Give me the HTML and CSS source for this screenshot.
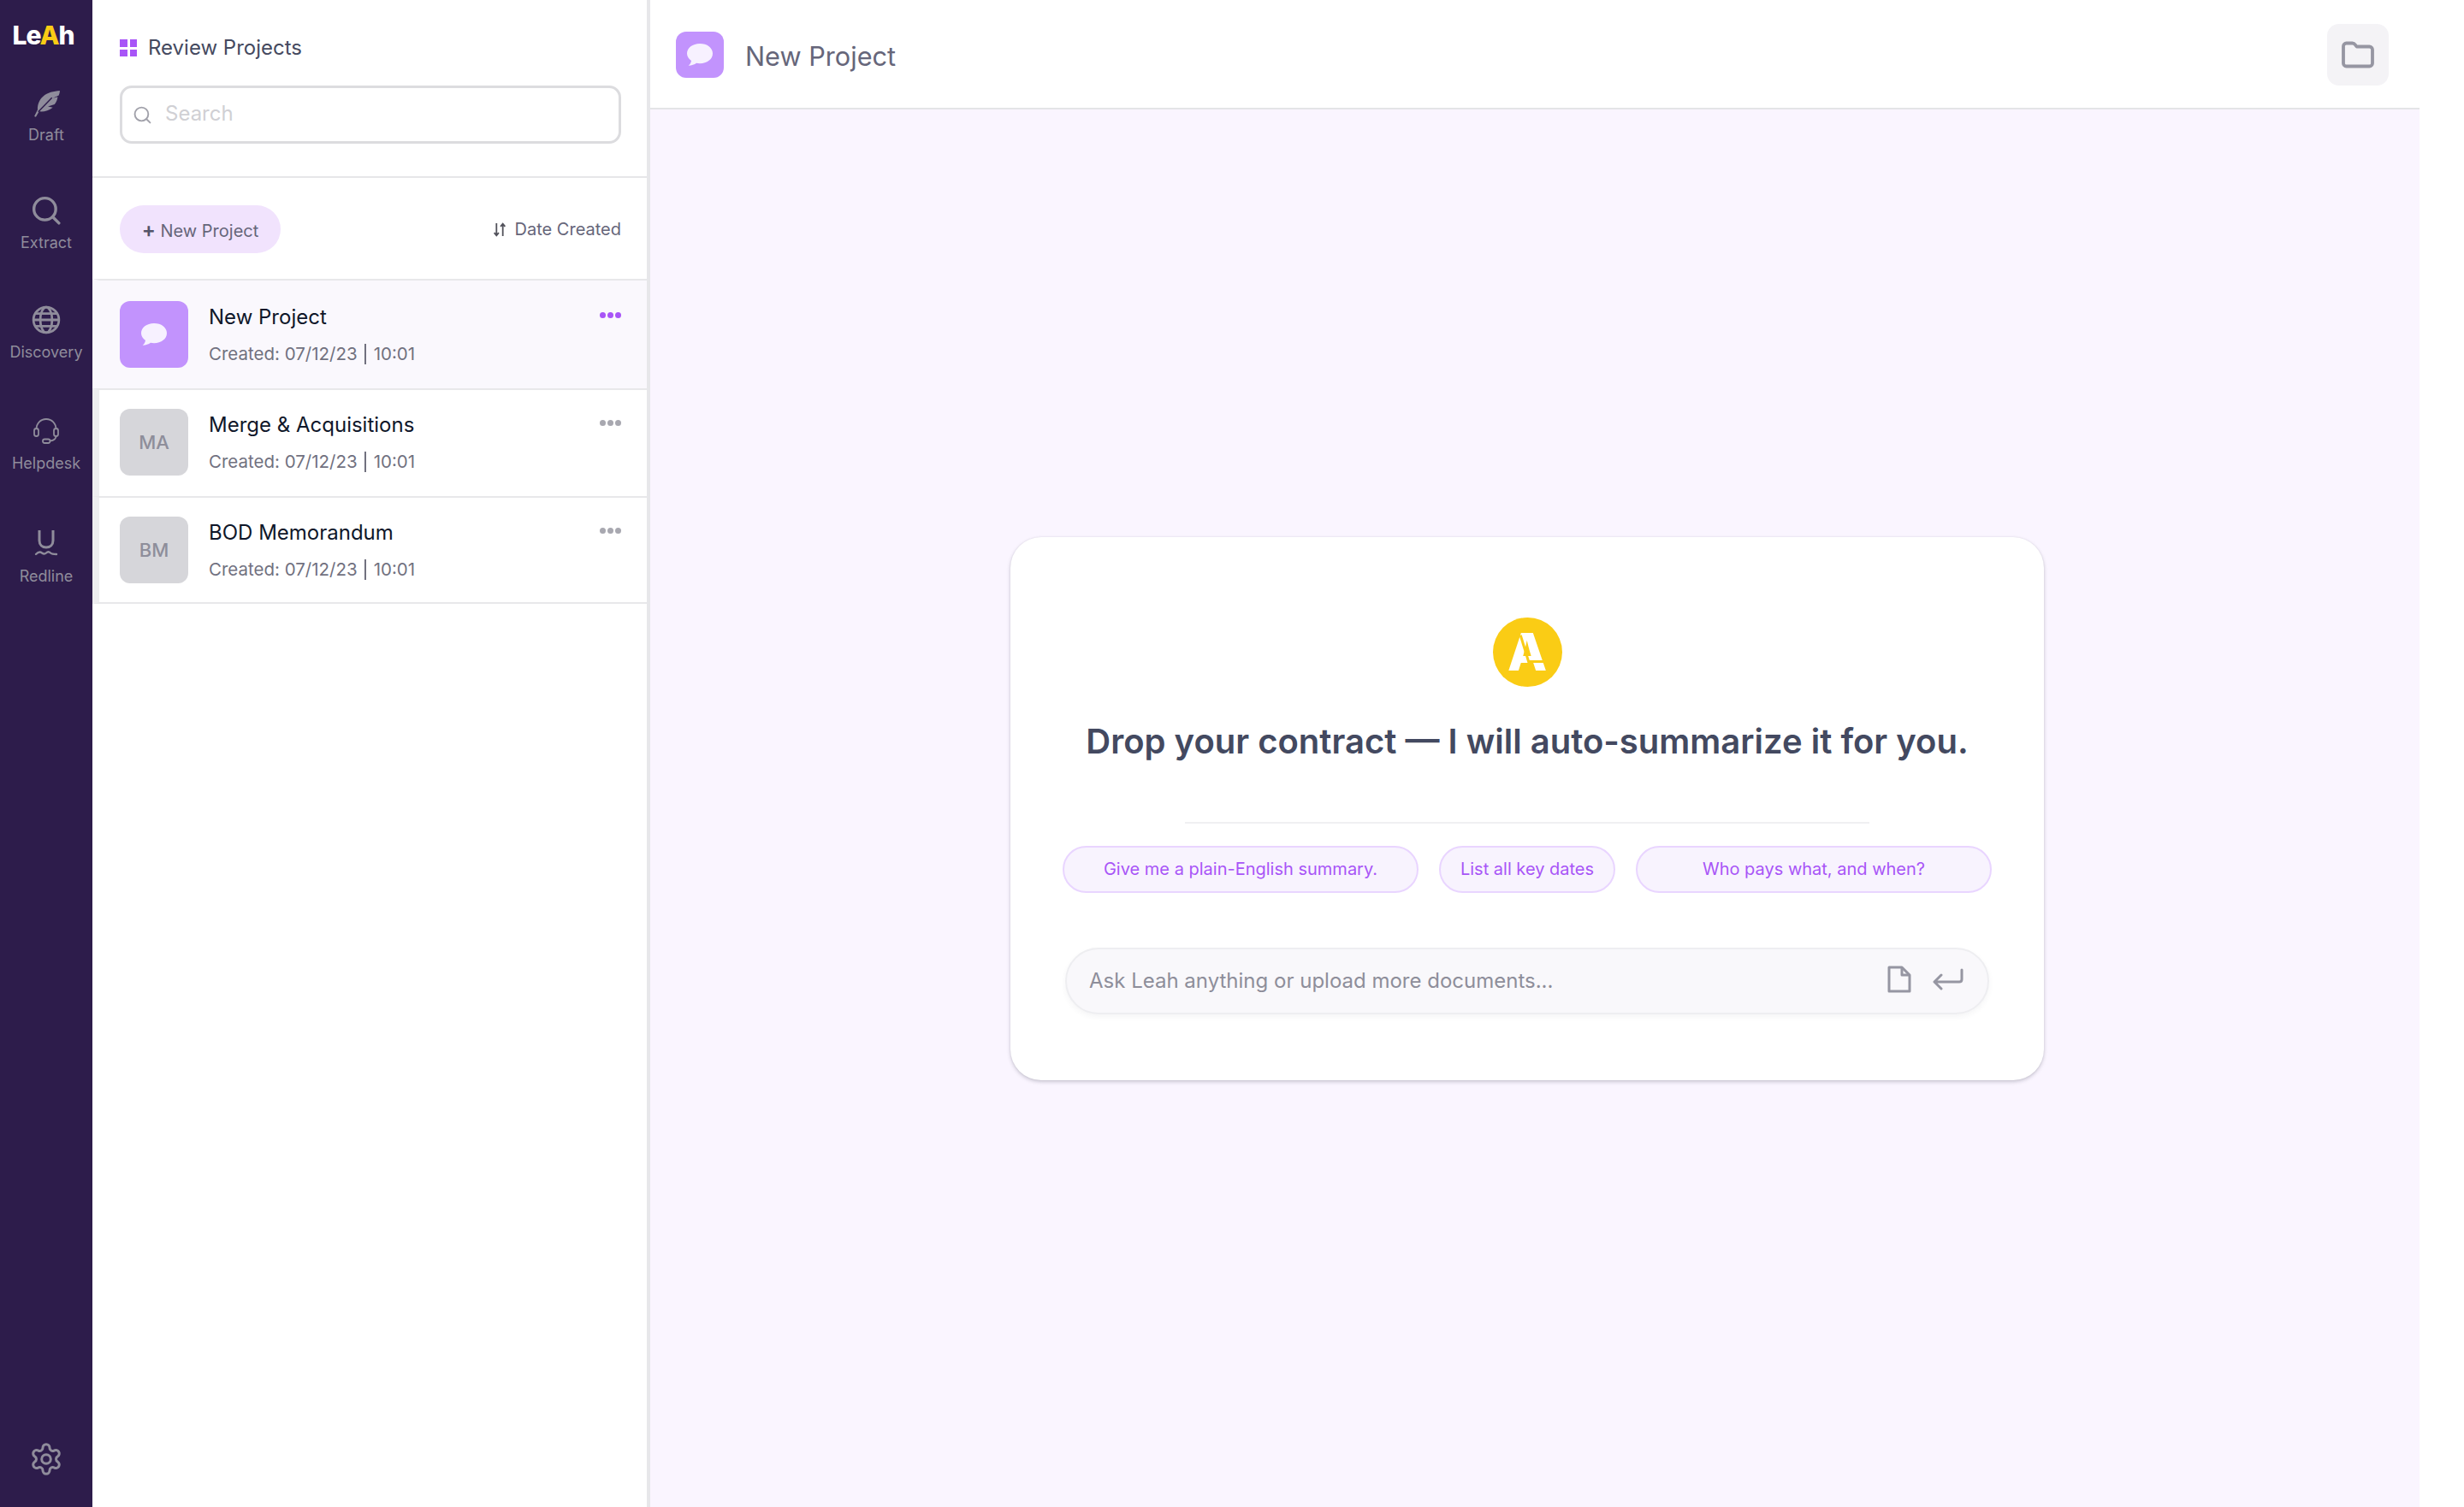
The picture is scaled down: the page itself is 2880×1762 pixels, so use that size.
FILE: index.html
```html
<!DOCTYPE html>
<html lang="en">

<head>
    <meta charset="UTF-8">
    <meta name="viewport" content="width=device-width, initial-scale=1.0">
    <title>Leah - Review Projects</title>
    <link rel="stylesheet" href="styles.css">
</head>

<body>
    <nav class="rail">
        <div class="brand">Le<span class="brand-a">A</span>h</div>

        <a class="rail-item rail-draft">
            <svg viewBox="0 0 32 32" width="33" height="33"><path fill="currentColor" d="M31 1c-7 .6-14 2-19 6.5C7.5 11.5 5.5 17 5.8 22.500L2 30l1.800.8 3.700-6.300c5.500.6 11-.8 15.500-4.500l-5.500-1 7.500-2.500c2.300-3 3.300-6 3.500-8.500L23 9.500l6.800-3.300C30.500 4.500 31 2.800 31 1z"/><path fill="none" stroke="#2d1c4b" stroke-width="1.4" d="M6.500 25 22 9"/></svg>
            <span>Draft</span>
        </a>
        <a class="rail-item rail-extract">
            <svg viewBox="0 0 32 32" width="34" height="34"><circle cx="14.5" cy="14.5" r="12" fill="none" stroke="currentColor" stroke-width="3.2"/><path d="M24 24l6 6" stroke="currentColor" stroke-width="3.2" stroke-linecap="round"/></svg>
            <span>Extract</span>
        </a>
        <a class="rail-item rail-discovery">
            <svg viewBox="0 0 32 32" width="34" height="34" fill="none" stroke="currentColor" stroke-width="2.6"><circle cx="16" cy="16" r="14"/><ellipse cx="16" cy="16" rx="6.5" ry="14"/><path d="M2 16h28M4 9h24M4 23h24"/></svg>
            <span>Discovery</span>
        </a>
        <a class="rail-item rail-helpdesk">
            <svg viewBox="0 0 32 32" width="32" height="32" fill="none" stroke="currentColor" stroke-width="1.8"><path d="M4.500 14C4.500 7 9.500 2 16 2s11.500 5 11.500 12"/><rect x="2" y="13" width="5" height="9" rx="2.500"/><rect x="25" y="13" width="5" height="9" rx="2.500"/><path d="M27.500 22c0 3-3 5-7 5.500"/><rect x="12" y="25.500" width="8.500" height="4.500" rx="2.200"/></svg>
            <span>Helpdesk</span>
        </a>
        <a class="rail-item rail-redline">
            <svg viewBox="0 0 32 32" width="32" height="32" fill="none" stroke="currentColor" stroke-width="3"><path d="M8 1v12c0 5 3.500 8 8 8s8-3 8-8V1"/><path d="M4 29c3-3 5-3 7-1.500s3.500 1.500 5 0 3.500-1.500 5 0 4 1.500 7 1.500" stroke-linecap="round" stroke-width="2.4"/></svg>
            <span>Redline</span>
        </a>

        <a class="rail-settings">
            <svg viewBox="-18 -19 36 38" width="36" height="38" fill="none" stroke="currentColor" stroke-width="3"><path d="M-4-13.24A4 4 0 0 1 4-13.24A3.54 3.54 0 0 0 9.47-10.08A4 4 0 0 1 13.46-3.16A3.54 3.54 0 0 0 13.46 3.16A4 4 0 0 1 9.47 10.08A3.54 3.54 0 0 0 4 13.24A4 4 0 0 1-4 13.24A3.54 3.54 0 0 0-9.47 10.08A4 4 0 0 1-13.46 3.16A3.54 3.54 0 0 0-13.46-3.16A4 4 0 0 1-9.47-10.08A3.54 3.54 0 0 0-4-13.24Z"/><circle r="5.3"/></svg>
        </a>
    </nav>

    <aside class="sidebar">
        <div class="sidebar-top">
            <h2 class="sidebar-title">
                <span class="grid-icon"><i></i><i></i><i></i><i></i></span>
                Review Projects
            </h2>
            <label class="search">
                <svg viewBox="0 0 20 20" width="21" height="21" fill="none" stroke="#a1a1aa" stroke-width="1.8"><circle cx="9" cy="9" r="7.5"/><path d="M14.500 14.500l4 4" stroke-linecap="round"/></svg>
                <input type="text" placeholder="Search">
            </label>
        </div>

        <div class="toolbar">
            <button class="new-btn" type="button"><span class="plus">+</span> New Project</button>
            <div class="sort">
                <svg viewBox="0 0 15 18" width="16" height="19" fill="none" stroke="#52525b" stroke-width="1.7"><path d="M4 2v13M1.500 12.500 4 15.500l2.500-3M11 16V3M8.500 5.500 11 2.500l2.500 3"/></svg>
                Date Created
            </div>
        </div>

        <ul class="projects">
            <li class="project active">
                <div class="avatar avatar-purple">
                    <svg viewBox="0 0 32 28" width="32" height="28"><path fill="#f7f1ff" d="M16 1C7.500 1 1 6 1 12.500c0 3.500 2 6.500 5 8.500-.3 2.200-1.500 4.300-3.300 5.800 3.800-.1 7-1.300 9.300-3 1.300.3 2.600.4 4 .4 8.500 0 15-5 15-11.700S24.500 1 16 1z"/></svg>
                </div>
                <div class="project-text">
                    <div class="project-name">New Project</div>
                    <div class="project-date">Created: 07/12/23 <span class="sep"></span> 10:01</div>
                </div>
                <div class="dots"><i></i><i></i><i></i></div>
            </li>
            <li class="project">
                <div class="avatar">MA</div>
                <div class="project-text">
                    <div class="project-name">Merge &amp; Acquisitions</div>
                    <div class="project-date">Created: 07/12/23 <span class="sep"></span> 10:01</div>
                </div>
                <div class="dots"><i></i><i></i><i></i></div>
            </li>
            <li class="project">
                <div class="avatar">BM</div>
                <div class="project-text">
                    <div class="project-name">BOD Memorandum</div>
                    <div class="project-date">Created: 07/12/23 <span class="sep"></span> 10:01</div>
                </div>
                <div class="dots"><i></i><i></i><i></i></div>
            </li>
        </ul>
    </aside>

    <main class="main">
        <header class="main-header">
            <div class="header-icon">
                <svg viewBox="0 0 32 28" width="32" height="28"><path fill="#f7f1ff" d="M16 1C7.500 1 1 6 1 12.500c0 3.500 2 6.500 5 8.500-.3 2.200-1.500 4.300-3.300 5.800 3.800-.1 7-1.300 9.300-3 1.300.3 2.600.4 4 .4 8.500 0 15-5 15-11.700S24.500 1 16 1z"/></svg>
            </div>
            <h1 class="main-title">New Project</h1>
            <button class="folder-btn" type="button">
                <svg viewBox="0 0 38 32" width="38" height="32" fill="none" stroke="#9696a2" stroke-width="3.8" stroke-linejoin="round"><path d="M2 6c0-2 1.500-3.500 3.500-3.500h7c1.500 0 2.500.6 3.400 1.800l1.600 2.200h15c2 0 3.500 1.500 3.500 3.500v16c0 2-1.500 3.500-3.500 3.500h-27C3.500 29.500 2 28 2 26z"/></svg>
            </button>
        </header>

        <section class="stage">
            <div class="card">
                <div class="logo-circle">A</div>
                <h3 class="card-title">Drop your contract — I will auto-summarize it for you.</h3>
                <hr class="card-rule">
                <div class="chips">
                    <button class="chip chip-wide" type="button">Give me a plain-English summary.</button>
                    <button class="chip" type="button">List all key dates</button>
                    <button class="chip chip-wide" type="button">Who pays what, and when?</button>
                </div>
                <div class="ask">
                    <input type="text" placeholder="Ask Leah anything or upload more documents...">
                    <svg viewBox="0 0 28 32" width="28" height="32" fill="none" stroke="#9696a2" stroke-width="3" stroke-linejoin="round"><path d="M2 2h15l9 9v19H2z"/><path d="M17 2v9h9"/></svg>
                    <svg viewBox="0 0 36 26" width="36" height="26" fill="none" stroke="#9696a2" stroke-width="3" stroke-linecap="round" stroke-linejoin="round"><path d="M34 2v11c0 2-1 3-3 3H3M10 8l-8 8 8 8"/></svg>
                </div>
            </div>
        </section>
    </main>
</body>

</html>
```

FILE: styles.css
```css
* {
    box-sizing: border-box;
}

html,
body {
    height: 100%;
}

body {
    margin: 0;
    display: flex;
    height: 1762px;
    overflow: hidden;
    background-color: #fff;
    font-family: Inter, "Liberation Sans", sans-serif;
    color: #18181b;
}

button,
input {
    font-family: inherit;
}

/* left rail */
.rail {
    width: 108px;
    flex: none;
    display: flex;
    flex-direction: column;
    align-items: center;
    background-color: #2d1c4b;
    color: #8f8c9b;
    padding-top: 23px;
}

.brand {
    font-size: 30px;
    line-height: 36px;
    font-weight: 800;
    letter-spacing: -1px;
    color: #fff;
    margin-bottom: 46px;
    padding-right: 7px;
}

.brand-a {
    color: #facc15;
}

.rail-item {
    display: flex;
    flex-direction: column;
    align-items: center;
    gap: 9px;
    font-size: 18px;
    line-height: 22px;
}

.rail-draft {
    margin-bottom: 60px;
}

.rail-extract {
    gap: 10px;
    margin-bottom: 62px;
}

.rail-discovery {
    gap: 10px;
    margin-bottom: 65px;
}

.rail-helpdesk {
    gap: 11px;
    margin-bottom: 66px;
}

.rail-redline {
    gap: 12px;
}

.rail-settings {
    margin-top: auto;
    margin-bottom: 37px;
    line-height: 0;
}

/* project list */
.sidebar {
    width: 652px;
    flex: none;
    border-right: 4px solid #e7e7ea;
    background-color: #fff;
}

.sidebar-top {
    padding: 41px 30px 38px 32px;
    border-bottom: 2px solid #e6e6e8;
}

.sidebar-title {
    margin: 0 0 29px;
    display: flex;
    align-items: center;
    gap: 13px;
    font-size: 24px;
    line-height: 30px;
    font-weight: 400;
    color: #454a60;
}

.grid-icon {
    width: 20px;
    height: 20px;
    display: grid;
    grid-template-columns: 1fr 1fr;
    gap: 3px;
}

.grid-icon i {
    background-color: #a855f7;
}

.search {
    height: 68px;
    display: flex;
    align-items: center;
    gap: 16px;
    padding: 0 13px;
    border: 3px solid #dcdcdf;
    border-radius: 14px;
}

.search input {
    flex: 1;
    border: none;
    outline: none;
    font-size: 24px;
    min-width: 0;
    padding: 0 0 3px;
}

.search input::placeholder {
    color: #d0d0d4;
}

.toolbar {
    height: 118px;
    display: flex;
    align-items: center;
    justify-content: space-between;
    padding: 2px 30px 0 32px;
}

.new-btn {
    height: 56px;
    width: 188px;
    border: none;
    border-radius: 28px;
    background-color: #f1e3fd;
    font-size: 20px;
    color: #66667a;
    padding: 0;
}

.plus {
    font-weight: 600;
    font-size: 24px;
    color: #55556a;
}

.sort {
    display: flex;
    align-items: center;
    gap: 10px;
    font-size: 20px;
    color: #66667a;
}

.projects {
    list-style: none;
    margin: 0;
    padding: 0;
}

.project {
    height: 126px;
    display: flex;
    gap: 24px;
    padding: 22px 30px 0 24px;
    border-top: 2px solid #e8e8ea;
    border-left: 8px solid #eeeef0;
}

.project:last-child {
    border-bottom: 2px solid #e8e8ea;
}

.project.active {
    height: 128px;
    padding-top: 24px;
    background-color: #faf8fd;
    border-left-color: #faf8fd;
}

.avatar {
    width: 80px;
    height: 78px;
    flex: none;
    display: flex;
    align-items: center;
    justify-content: center;
    border-radius: 12px;
    background-color: #d6d6da;
    color: #8e8e9a;
    font-size: 22px;
    font-weight: 500;
}

.avatar-purple {
    background-color: #c293fd;
}

.project-text {
    flex: 1;
    margin-top: 4px;
}

.project-name {
    font-size: 24px;
    line-height: 30px;
    color: #0f172a;
    margin-bottom: 14px;
}

.project-date {
    font-size: 20.5px;
    line-height: 28px;
    color: #71717f;
}

.sep {
    display: inline-block;
    width: 1.5px;
    height: 24px;
    background-color: #71717f;
    vertical-align: -5px;
    margin: 0 3px;
}

.dots {
    display: flex;
    align-self: flex-start;
    gap: 2px;
    padding-top: 13px;
}

.dots i {
    width: 7px;
    height: 7px;
    border-radius: 50%;
    background-color: #a8a8b0;
}

.active .dots i {
    background-color: #a855f7;
}

/* main panel */
.main {
    width: 2068px;
    flex: none;
    display: flex;
    flex-direction: column;
    background-color: #faf5ff;
}

.main-header {
    height: 128px;
    flex: none;
    display: flex;
    align-items: center;
    padding: 2px 36px 0 30px;
    background-color: #fff;
    border-bottom: 2px solid #e4e4e7;
}

.header-icon {
    width: 56px;
    height: 54px;
    display: flex;
    align-items: center;
    justify-content: center;
    border-radius: 12px;
    background-color: #c293fd;
}

.main-title {
    flex: 1;
    margin: 2px 0 0 25px;
    font-size: 30.7px;
    font-weight: 400;
    color: #66667a;
}

.folder-btn {
    width: 72px;
    height: 72px;
    display: flex;
    align-items: center;
    justify-content: center;
    border: none;
    border-radius: 14px;
    background-color: #f4f3f6;
    padding: 0;
}

.stage {
    flex: 1;
    display: flex;
    align-items: center;
    justify-content: center;
    padding-right: 18px;
}

.card {
    width: 1208px;
    height: 635px;
    display: flex;
    flex-direction: column;
    align-items: center;
    padding-top: 94px;
    border-radius: 36px;
    background-color: #fff;
    box-shadow: 0 2px 4px rgba(60, 60, 80, 0.25), 0 0 2px rgba(60, 60, 80, 0.1);
}

.logo-circle {
    position: relative;
    width: 81px;
    height: 81px;
    display: flex;
    align-items: center;
    justify-content: center;
    border-radius: 50%;
    background-color: #facc15;
    color: #fff;
    font-size: 60px;
    font-weight: 800;
}

/* stencil cuts across the A */
.logo-circle::before {
    content: "";
    position: absolute;
    left: 41px;
    top: 50px;
    width: 24px;
    height: 3px;
    background-color: #facc15;
}

.logo-circle::after {
    content: "";
    position: absolute;
    left: 36px;
    top: 20px;
    width: 3px;
    height: 36px;
    background-color: #facc15;
    transform: rotate(-17deg);
}

.card-title {
    margin: 40px 0 0;
    font-size: 40px;
    line-height: 48px;
    font-weight: 600;
    color: #434960;
}

.card-rule {
    width: 800px;
    margin: 70px 0 26px;
    border: none;
    border-top: 2px solid #f0f0f2;
}

.chips {
    display: flex;
    gap: 24px;
}

.chip {
    height: 55px;
    width: 206px;
    border: 2px solid #e9d5ff;
    border-radius: 28px;
    background-color: #f8f3fe;
    color: #a855f7;
    font-size: 20px;
    padding: 0;
}

.chip-wide {
    width: 416px;
}

.ask {
    width: 1080px;
    height: 78px;
    margin-top: 64px;
    display: flex;
    align-items: center;
    gap: 25px;
    padding: 0 28px 0 24px;
    border: 2px solid #eeeef1;
    border-radius: 39px;
    background-color: #f9f8fb;
    box-shadow: 0 3px 6px rgba(60, 60, 80, 0.05);
}

.ask input {
    flex: 1;
    border: none;
    outline: none;
    background: none;
    font-size: 24px;
    min-width: 0;
}

.ask input::placeholder {
    color: #8e8e9a;
}

.ask svg {
    margin-bottom: 4px;
}
```
